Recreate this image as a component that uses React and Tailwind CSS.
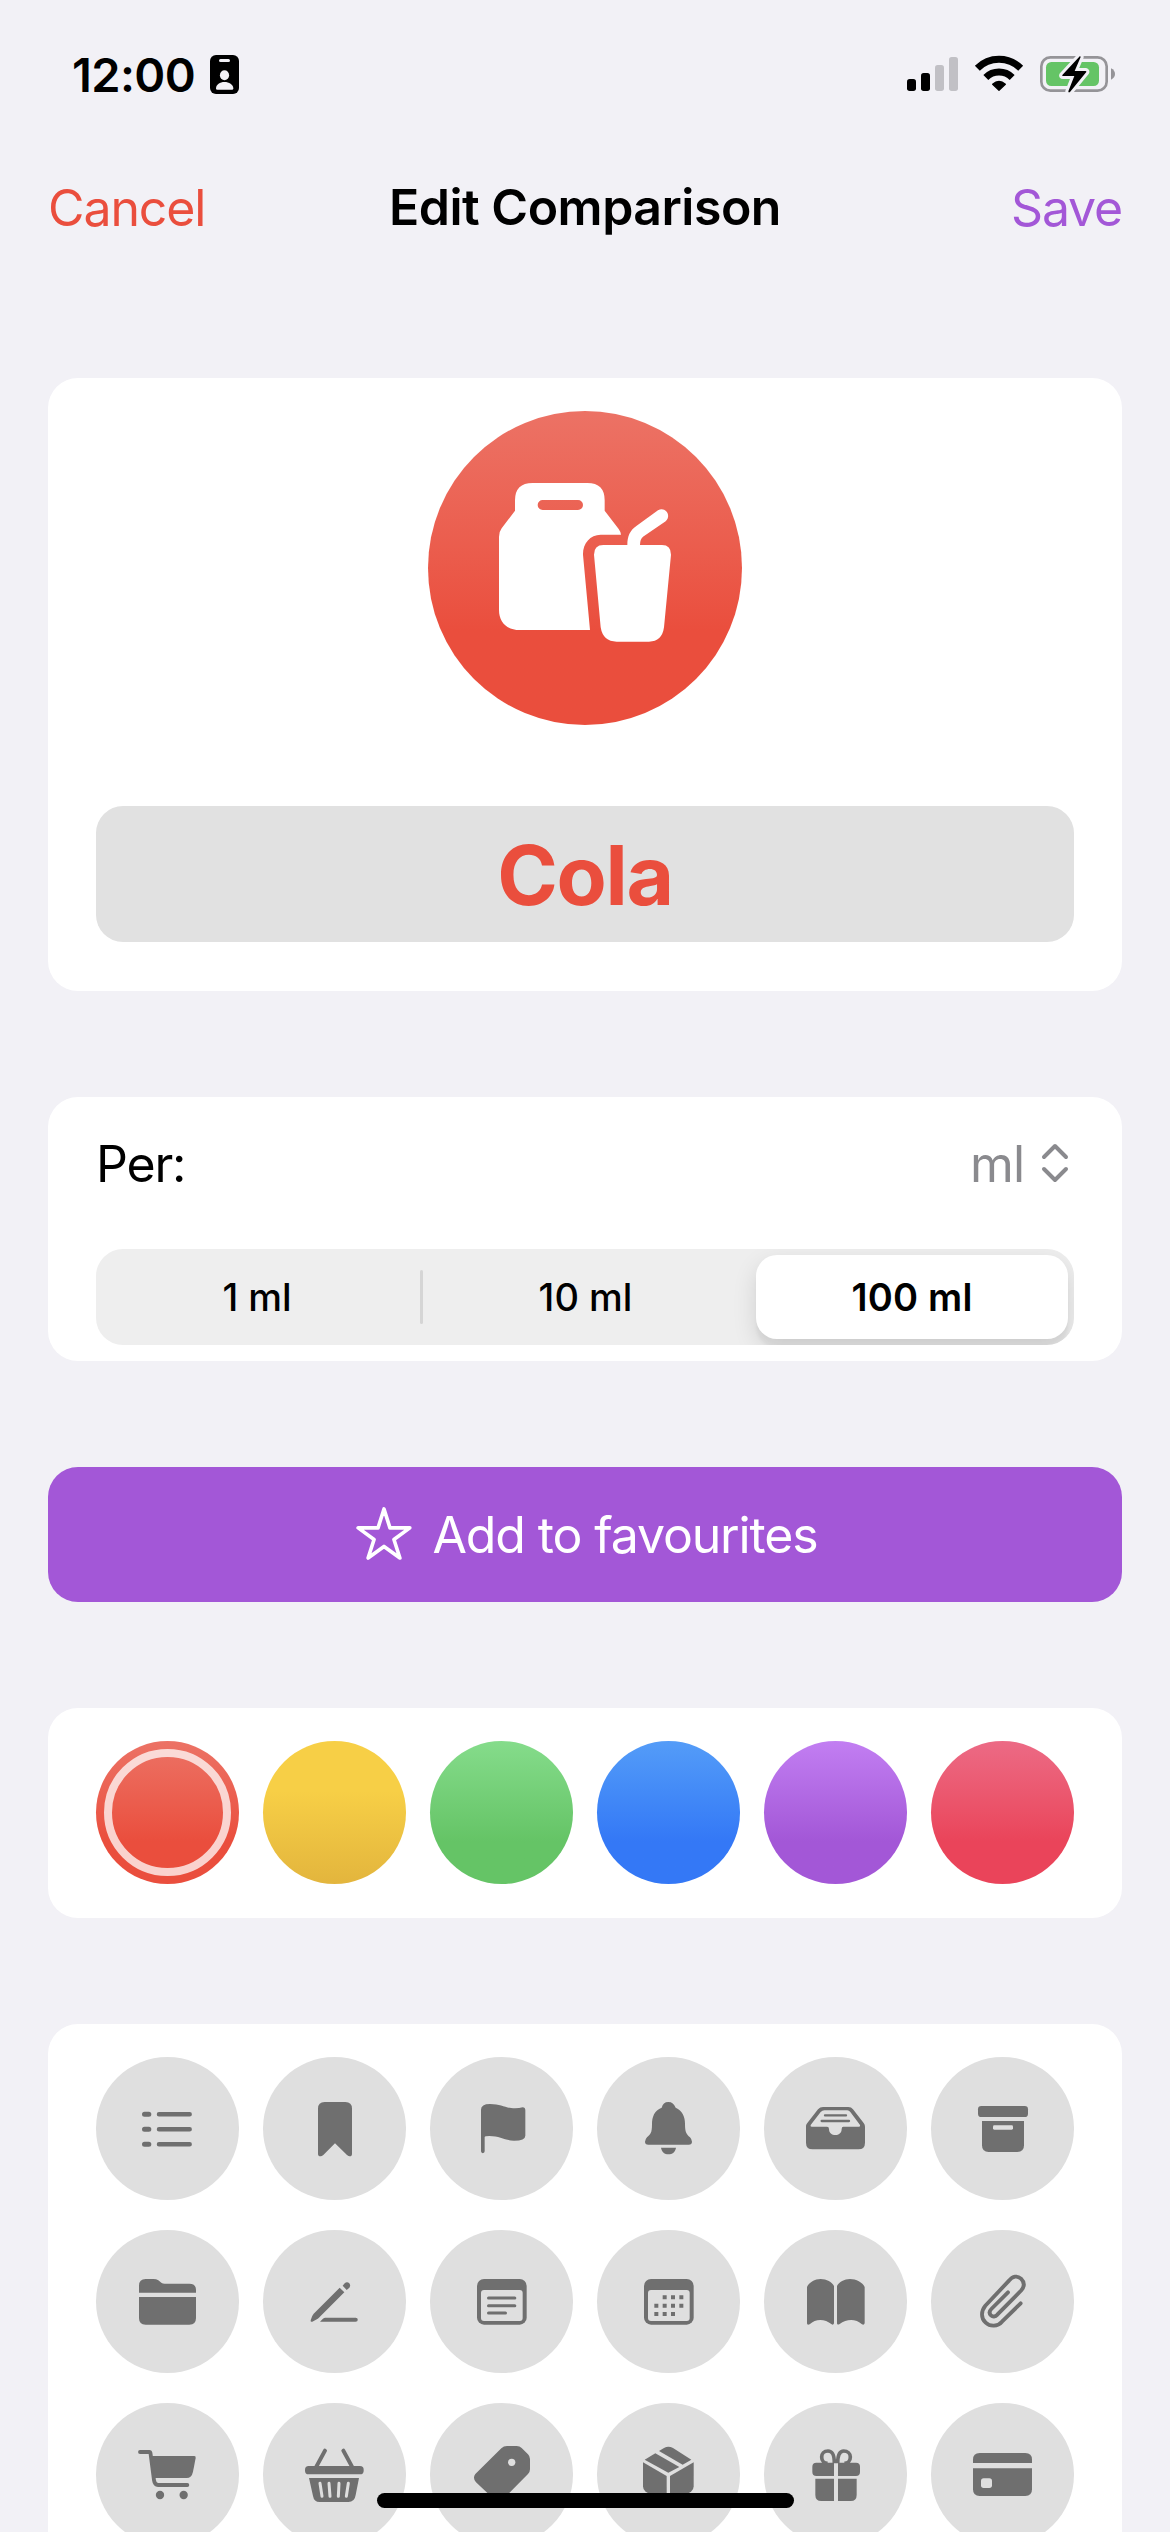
import { useState } from "react";

const colors = [
  { id: "red", className: "from-[#ec7265] to-[#ea4e3d] to-70%" },
  { id: "yellow", className: "from-[#f7cf46] from-35% to-[#e3b53d]" },
  { id: "green", className: "from-[#85dc8b] to-[#65c466] to-70%" },
  { id: "blue", className: "from-[#549cf8] to-[#3478f6] to-70%" },
  { id: "purple", className: "from-[#c27ef2] to-[#a357d7] to-70%" },
  { id: "pink", className: "from-[#ec6a85] to-[#ea445a] to-70%" },
];

const units = ["1 ml", "10 ml", "100 ml"];

// Every icon is drawn on the same 429 x 429 canvas as its circle.
// "fill-[#dfdfdf]" shapes are cut-outs in the circle colour.
const icons = [
  {
    id: "list",
    art: (
      <g stroke="currentColor" strokeLinecap="round">
        <path d="M145.5 172h13M145.5 217h13M145.5 262h13" strokeWidth="15" />
        <path d="M189 172h92M189 217h92M189 262h92" strokeWidth="13.5" />
      </g>
    ),
  },
  {
    id: "bookmark",
    art: <path d="M165 155Q165 135 185 135H247Q267 135 267 155V290Q267 298 260 298Q257 298 252 294L216 259L181 294Q176 298 173 298Q165 298 165 290Z" />,
  },
  {
    id: "flag",
    art: <path d="M153 158Q153 141 180 141C215 141 225 154 255 154Q268 154 278 151Q286 151 286 160V236Q286 251 252 251C225 251 210 237 178 237Q165 237 164 240V283a5.5 5.5 0 0 1-11 0Z" />,
  },
  {
    id: "bell",
    art: (
      <>
        <path d="M214 135C203 135 197 141 194 152C172 160 165 180 165 202C165 230 160 232 150 241Q144 248 144 254Q144 263 154 263H275Q285 263 285 254Q285 248 279 241C268 230 264 226 264 200C264 180 256 160 236 152C231 141 225 135 214 135Z" />
        <path d="M192 272H237C235 285 226 292 214 292C203 292 194 285 192 272Z" />
      </>
    ),
  },
  {
    id: "tray",
    art: (
      <>
        <path
          fillRule="evenodd"
          d="M126 207Q126 203 130 198L162 157Q168 150 177 150H253Q262 150 267 157L299 198Q303 203 303 209V257Q303 277 283 277H146Q126 277 126 257ZM181 160H250Q255 160 259 165L288 204Q290 209 285 209H238Q233 209 233 216C233 228 224 234 214 234C204 234 195 228 195 216Q195 209 189 209H143Q138 209 140 204L170 165Q175 160 181 160Z"
        />
        <path d="M183 175h63M173 192h82" stroke="currentColor" strokeWidth="7" strokeLinecap="round" />
      </>
    ),
  },
  {
    id: "archive",
    art: (
      <>
        <rect x="141" y="147" width="150" height="33" rx="10" />
        <path d="M153 192H279V265Q279 285 259 285H173Q153 285 153 265Z" />
        <rect x="186" y="205" width="60" height="13" rx="4" className="fill-[#dfdfdf]" />
      </>
    ),
  },
  {
    id: "folder",
    art: (
      <>
        <path d="M129 188V167Q129 147 149 147H172Q181 147 187 151L196 158Q200 161 206 161H280Q300 161 300 180V188Z" />
        <path d="M129 201H300V264Q300 284 280 284H149Q129 284 129 264Z" />
      </>
    ),
  },
  {
    id: "pencil",
    art: (
      <>
        <path d="M230 173L244 187L167 264Q163 268 148 275Q142 277 143 271Q147 256 152 251Z" />
        <path d="M239 167L245 160Q252 153 259 160Q264 167 259 173L251 180Z" />
        <path d="M171 275L179 267Q183 263 187 263H278a6.2 6.2 0 0 1 0 12.5Z" />
      </>
    ),
  },
  {
    id: "note",
    art: (
      <>
        <rect x="141" y="147" width="149" height="137" rx="21" />
        <rect x="153" y="180" width="125" height="93" rx="9" className="fill-[#dfdfdf]" />
        <path d="M175.5 204h79M175.5 227h79M175.5 249h51" stroke="currentColor" strokeWidth="9" strokeLinecap="round" />
      </>
    ),
  },
  {
    id: "calendar",
    art: (
      <>
        <rect x="141" y="147" width="149" height="137" rx="21" />
        <rect x="153" y="180" width="125" height="93" rx="9" className="fill-[#dfdfdf]" />
        <path
          d="M197 202h12M222 202h12M247 202h12M172 227h12M197 227h12M222 227h12M247 227h12M172 252h12M197 252h12M222 252h12"
          stroke="currentColor"
          strokeWidth="12"
        />
      </>
    ),
  },
  {
    id: "book",
    art: (
      <>
        <path d="M129 171C135 157 153 147 170 147C188 147 204 156 210 168V280Q208 286 203 283C182 266 155 266 137 283Q129 286 129 280Z" />
        <path d="M219 168C225 156 241 147 258 147C276 147 296 157 302 171V280Q300 286 294 283C276 266 248 266 227 282Q219 286 219 280Z" />
      </>
    ),
  },
  {
    id: "paperclip",
    art: (
      <path
        d="M269 220L213 275C200 290 178 291 164 278C149 264 150 243 163 227L234 152C245 138 259 136 270 146C282 158 280 170 271 181L199 254C193 261 185 261 180 256C174 250 175 243 181 237L231 187"
        fill="none"
        stroke="currentColor"
        strokeWidth="11.5"
        strokeLinecap="round"
      />
    ),
  },
  {
    id: "cart",
    art: (
      <>
        <path d="M132 147H160Q163 147 163.5 151L174 232Q176 246 186 246H274" fill="none" stroke="currentColor" strokeWidth="11.5" strokeLinecap="round" />
        <path d="M166 159H295Q300 159 299 165L291 206Q287 225 272 225H174Z" />
        <circle cx="192" cy="276" r="12.5" />
        <circle cx="263" cy="276" r="12.5" />
      </>
    ),
  },
  {
    id: "basket",
    art: (
      <>
        <path d="M186 143L160 191M241 143L267 191" stroke="currentColor" strokeWidth="12" strokeLinecap="round" />
        <rect x="126" y="189" width="176" height="25" rx="11" />
        <path d="M138 225H288L278 276Q275 297 256 297H170Q153 297 150 279Z" />
        <path d="M171 241L177 280M198 241L201 280M228 241L226 280M256 241L250 280" className="stroke-[#dfdfdf]" strokeWidth="9" strokeLinecap="round" />
      </>
    ),
  },
  {
    id: "tag",
    art: (
      <>
        <path d="M214 136Q221 129 231 129H260Q269 129 275 135L294 154Q300 160 300 168V199Q300 207 294 213L225 283Q205 300 185 282L138 238Q127 225 136 213Z" />
        <circle cx="245" cy="178" r="11" className="fill-[#dfdfdf]" />
      </>
    ),
  },
  {
    id: "box",
    art: (
      <>
        <path d="M143 170L175 151L247 192L214 209Z" />
        <path d="M186 144L201 135Q214 128 228 135L283 170L257 185Z" />
        <path d="M138 178L209 219V302L146 266Q138 261 138 250Z" />
        <path d="M290 178L219 219V302L282 266Q290 261 290 250Z" />
      </>
    ),
  },
  {
    id: "gift",
    art: (
      <>
        <path
          d="M211 181C211 155 206 144 192 144C180 144 173 152 173 162C173 173 180 181 191 181M221 181C221 155 226 144 239 144C251 144 259 152 259 162C259 173 252 181 241 181"
          fill="none"
          stroke="currentColor"
          strokeWidth="11"
        />
        <path d="M210 179V219H157Q145 219 145 207V191Q145 179 157 179ZM222 179V219H276Q288 219 288 207V191Q288 179 276 179Z" />
        <path d="M154 227H210V294H172Q154 294 154 276ZM278 227H222V294H260Q278 294 278 276Z" />
      </>
    ),
  },
  {
    id: "card",
    art: (
      <>
        <path d="M126 180V170Q126 150 146 150H283Q303 150 303 170V180Z" />
        <path d="M126 196H303V259Q303 279 283 279H146Q126 279 126 259Z" />
        <rect x="150" y="226" width="33" height="29" rx="8" className="fill-[#dfdfdf]" />
      </>
    ),
  },
];

function BadgeIcon() {
  return (
    <svg viewBox="0 0 29 39" className="w-[29px] h-[39px]">
      <rect width="29" height="39" rx="6" />
      <g fill="#f2f1f6">
        <rect x="9" y="4" width="11" height="3" rx="1.5" />
        <ellipse cx="14.5" cy="20.3" rx="4.6" ry="5" />
        <path d="M6 33.5C6 29.5 10 27 14.5 27S23.3 29.5 23.3 33.5Q23.3 34.7 22 34.7H7.3Q6 34.7 6 33.5Z" />
      </g>
    </svg>
  );
}

function StatusIcons() {
  return (
    <svg viewBox="0 0 624 114" className="w-[208px] h-[38px]">
      {/* Signal */}
      <rect x="0" y="72" width="27" height="36" rx="8" />
      <rect x="42" y="54" width="27" height="54" rx="8" />
      <rect x="84" y="30" width="27" height="78" rx="8" fill="#c1c0c5" />
      <rect x="126" y="6" width="27" height="102" rx="8" fill="#c1c0c5" />
      {/* Wifi */}
      <g fill="none" stroke="#000" strokeWidth="21">
        <path d="M211 39.5A92 92 0 0 1 341 39.5" />
        <path d="M236.5 67.5A56 56 0 0 1 315.5 67.5" />
      </g>
      <path d="M276 106L257 88Q276 70 295 88Z" stroke="#000" strokeWidth="4" strokeLinejoin="round" />
      {/* Battery */}
      <rect x="403" y="7" width="196" height="100" rx="27" fill="none" stroke="#959498" strokeWidth="8" />
      <rect x="417" y="21" width="159" height="72" rx="16" fill="#65c466" />
      <path d="M612 40Q624 46 624 57T612 74Z" fill="#959498" />
      <path d="M519 3L466 60Q464 63 468 63H502L484 109Q484 114 489 111L538 51Q539 48 535 48H503L521 6Z" fill="#000" stroke="#f2f1f6" strokeWidth="18" strokeLinejoin="round" paintOrder="stroke" />
    </svg>
  );
}

function TakeawayIcon() {
  return (
    <svg viewBox="0 0 942 942" fill="#fff" className="size-full">
      <path
        fillRule="evenodd"
        d="M261 268Q261 216 314 216H478Q530 216 530 268V299L572 354Q579 364 579 371H518C486 371 464 398 465 431L486 657H275C236 657 213 633 213 597V378Q213 362 221 352L261 299ZM344 267a15 15 0 0 0 0 30H450a15 15 0 0 0 0-30Z"
      />
      <path d="M498 431Q498 402 526 402H598C598 376 606 358 625 345L690 298C711 286 732 312 713 331L645 377Q636 384 636 402H702Q729 402 729 431L708 649Q702 692 663 692H566Q525 692 518 649Z" />
    </svg>
  );
}

function Header() {
  return (
    <>
      <div className="h-[148px] pl-[72px] pr-[55px] flex items-center justify-between">
        <div className="flex items-center gap-[15px]">
          <span className="text-[47px] leading-none font-semibold tracking-[-0.6px]">12:00</span>
          <BadgeIcon />
        </div>
        <StatusIcons />
      </div>
      <div className="h-[120px] px-12 grid grid-cols-[1fr_auto_1fr] items-center text-[50px] leading-none">
        <button className="text-left text-[#ea4e3d] tracking-[-1.1px]">Cancel</button>
        <h1 className="pb-0.5 font-semibold tracking-[-0.5px]">Edit Comparison</h1>
        <button className="text-right text-[#a357d7] tracking-[-1.2px]">Save</button>
      </div>
    </>
  );
}

function App() {
  const [color, setColor] = useState("red");
  const [unit, setUnit] = useState("100 ml");

  return (
    <div className="relative w-[1170px] h-[2532px] overflow-hidden bg-[#f2f1f6] text-black font-['Inter','Liberation_Sans',sans-serif]">
      <Header />

      <main className="mt-[110px] px-12 flex flex-col gap-[106px]">
        {/* Icon and name */}
        <section className="h-[613px] rounded-[30px] bg-white px-12 pt-[33px] flex flex-col items-center">
          <div className="size-[314px] rounded-full bg-linear-to-b from-[#ec7265] to-[#ea4e3d] to-70%">
            <TakeawayIcon />
          </div>
          <div className="mt-[81px] w-full h-[136px] rounded-[27px] bg-[#e1e1e1] pt-[3px] flex items-center justify-center">
            <span className="text-[82px] leading-none font-bold text-[#ea4e3d] tracking-[-1.3px]">Cola</span>
          </div>
        </section>

        {/* Unit */}
        <section className="h-[264px] rounded-[30px] bg-white px-12 pb-4 flex flex-col">
          <div className="flex-1 pr-[5px] pb-[18px] flex items-center text-[50px] leading-none">
            <span className="tracking-[-1.2px]">Per:</span>
            <span className="ml-auto text-[#8a8a8e] tracking-[-1px]">ml</span>
            <svg viewBox="0 0 28 40" fill="none" className="ml-[17px] mb-0.5 w-7 h-10 stroke-[#8a8a8e]" strokeWidth="4" strokeLinecap="round" strokeLinejoin="round">
              <path d="M3 14L14 3L25 14M3 26L14 37L25 26" />
            </svg>
          </div>
          <div className="h-24 rounded-[27px] bg-[#eeeeee] p-1.5 grid grid-cols-[321px_1fr_312px] overflow-hidden text-[38px] leading-none">
            {units.map((item, i) => (
              <div key={item} className="h-full flex items-center">
                <button
                  onClick={() => setUnit(item)}
                  className={
                    item === unit
                      ? "flex-1 h-full rounded-[21px] bg-white font-semibold tracking-[0.2px] shadow-[0_9px_24px_rgba(0,0,0,0.12),0_9px_3px_rgba(0,0,0,0.04)]"
                      : "flex-1 h-full pr-2 font-medium"
                  }
                >
                  {item}
                </button>
                {i === 0 && <span className="w-[3px] h-[54px] rounded-full bg-[#d5d5d5]" />}
              </div>
            ))}
          </div>
        </section>

        {/* Favourite */}
        <button className="h-[135px] rounded-[30px] bg-[#a357d7] pl-1 flex items-center justify-center gap-5 text-white text-[50px] leading-none">
          <svg viewBox="0 0 168 160" className="mb-0.5 w-14 h-[53px]" fill="none" stroke="#fff" strokeWidth="11" strokeLinejoin="round">
            <path d="M84 6L102 63H162L114 98L132 154L84 119L36 154L54 98L6 63H66Z" />
          </svg>
          <span className="tracking-[-1.15px]">Add to favourites</span>
        </button>

        {/* Colours */}
        <section className="h-[210px] rounded-[30px] bg-white px-12 pt-[33px] flex justify-between">
          {colors.map((item) => (
            <button key={item.id} onClick={() => setColor(item.id)} className={`size-[143px] rounded-full p-2 bg-linear-to-b ${item.className}`}>
              {item.id === color && <div className="size-full rounded-full border-8 border-white/75" />}
            </button>
          ))}
        </section>

        {/* Icons */}
        <section className="rounded-[30px] bg-white px-12 py-[33px] grid grid-cols-6 gap-x-6 gap-y-[30px]">
          {icons.map((icon) => (
            <button key={icon.id} className="size-[143px] rounded-full bg-[#dfdfdf] text-[#6f6f6f]">
              <svg viewBox="0 0 429 429" fill="currentColor" className="size-full">
                {icon.art}
              </svg>
            </button>
          ))}
        </section>
      </main>

      {/* Home indicator */}
      <div className="absolute bottom-6 left-[377px] w-[417px] h-[15px] rounded-full bg-black" />
    </div>
  );
}

export default App;
